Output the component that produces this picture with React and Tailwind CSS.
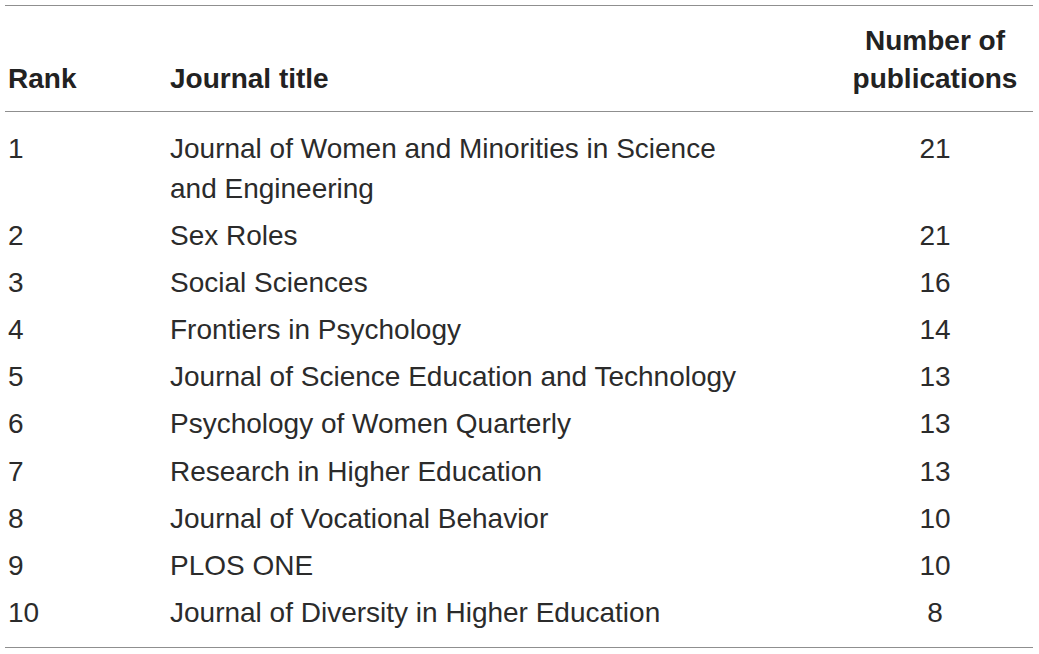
export default function App() {
  const rows = [
    ["1", "Journal of Women and Minorities in Science and Engineering", "21"],
    ["2", "Sex Roles", "21"],
    ["3", "Social Sciences", "16"],
    ["4", "Frontiers in Psychology", "14"],
    ["5", "Journal of Science Education and Technology", "13"],
    ["6", "Psychology of Women Quarterly", "13"],
    ["7", "Research in Higher Education", "13"],
    ["8", "Journal of Vocational Behavior", "10"],
    ["9", "PLOS ONE", "10"],
    ["10", "Journal of Diversity in Higher Education", "8"],
  ];
  return (
    <div className="w-[1039px] h-[654px] bg-white pt-[5px] pl-[5px]" style={{ fontFamily: '"Liberation Sans", Arial, sans-serif' }}>
      <table className="w-[1028px] border-collapse text-[28px] text-[#2b2b2b] table-fixed">
        <colgroup>
          <col className="w-[162px]" />
          <col className="w-[670px]" />
          <col className="w-[196px]" />
        </colgroup>
        <thead>
          <tr className="border-t-[1.5px] border-b-[1.5px] border-[#8f8f8f]">
            <th className="text-left font-bold align-bottom leading-[38px] pl-[3px] pb-[13px] text-[#222]">Rank</th>
            <th className="text-left font-bold align-bottom leading-[38px] pl-[3px] pb-[13px] text-[#222]">Journal title</th>
            <th className="text-center font-bold align-bottom leading-[38px] pb-[13px] pt-[16px] text-[#222]">
              Number of
              <br />
              publications
            </th>
          </tr>
        </thead>
        <tbody className="border-b-[1.5px] border-[#8f8f8f]">
          {rows.map((r, i) => {
            const py =
              i === 0 ? "pt-[16.5px] pb-[3.6px]" : i === rows.length - 1 ? "pt-[3.6px] pb-[14px]" : "py-[3.6px]";
            return (
              <tr key={i}>
                <td className={`align-top leading-[40px] pl-[3px] ${py}`}>{r[0]}</td>
                <td className={`align-top leading-[40px] pl-[3px] pr-[90px] ${py}`}>{r[1]}</td>
                <td className={`align-top leading-[40px] text-center ${py}`}>{r[2]}</td>
              </tr>
            );
          })}
        </tbody>
      </table>
    </div>
  );
}
